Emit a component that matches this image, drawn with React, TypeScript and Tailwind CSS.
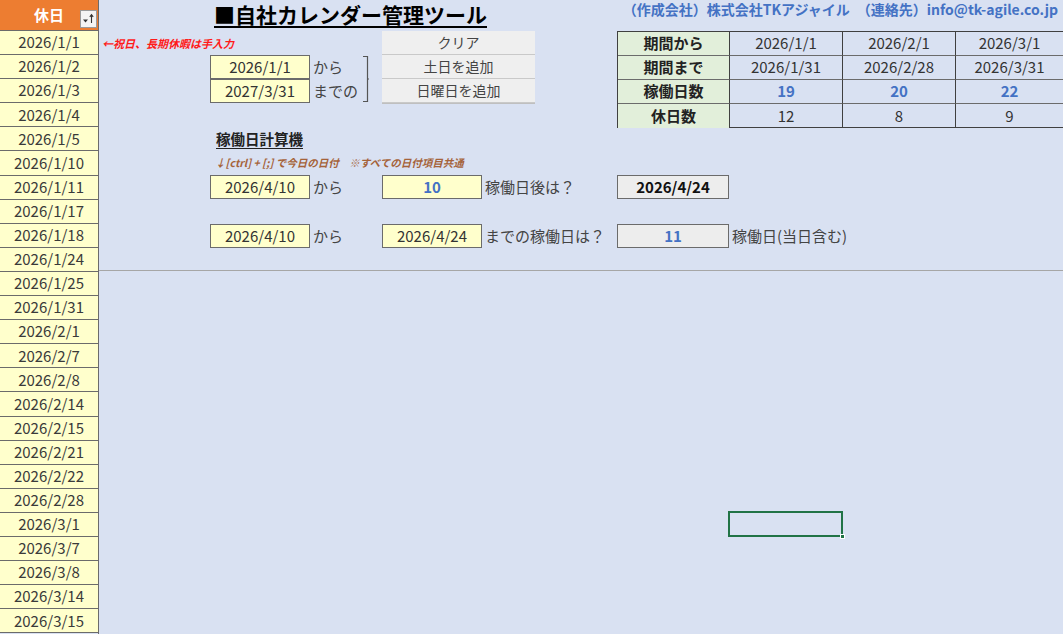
import React from "react";

const holidays = [
  "2026/1/1", "2026/1/2", "2026/1/3", "2026/1/4", "2026/1/5", "2026/1/10", "2026/1/11",
  "2026/1/17", "2026/1/18", "2026/1/24", "2026/1/25", "2026/1/31", "2026/2/1", "2026/2/7",
  "2026/2/8", "2026/2/14", "2026/2/15", "2026/2/21", "2026/2/22", "2026/2/28", "2026/3/1",
  "2026/3/7", "2026/3/8", "2026/3/14", "2026/3/15",
];

const periods = [
  { from: "2026/1/1", to: "2026/1/31", work: 19, off: 12 },
  { from: "2026/2/1", to: "2026/2/28", work: 20, off: 8 },
  { from: "2026/3/1", to: "2026/3/31", work: 22, off: 9 },
];

const font = { fontFamily: '"Noto Sans CJK JP", "Noto Sans", sans-serif' };

function InputCell({ children, blue }: { children: React.ReactNode; blue?: boolean }) {
  return (
    <div
      className={`w-[100px] h-[24px] flex items-center justify-center bg-[#ffffcc] border border-[#6b6b6b] text-[15px] ${
        blue ? "text-[#4472c4] font-bold" : "text-[#333]"
      }`}
    >
      {children}
    </div>
  );
}

function SheetButton({ label }: { label: string }) {
  return (
    <div className="h-[24px] flex items-center justify-center bg-[#efefef] border-b border-[#c9c9c9] text-[14px] text-[#444] shadow-[0_1px_0_#bfbfbf]">
      {label}
    </div>
  );
}

function FilterButton() {
  return (
    <div className="absolute right-[1px] bottom-[2px] w-[17px] h-[18px] bg-[#f4f4f4] border border-[#9a9a9a] flex items-center justify-center">
      <svg width="13" height="12" viewBox="0 0 13 12">
        <path d="M1 6.5h5l-2.5 3z" fill="#333" />
        <path d="M9.5 10V2M7.8 3.8L9.5 1.6l1.7 2.2" stroke="#333" strokeWidth="1.1" fill="none" />
      </svg>
    </div>
  );
}

export default function App() {
  return (
    <div className="w-[1063px] h-[634px] overflow-hidden flex bg-[#d9e1f2]" style={font}>
      {/* Column A: holidays */}
      <div className="w-[99px] shrink-0 flex flex-col border-r border-[#6b6b6b]">
        <div className="relative h-[31px] bg-[#ed7d31] flex items-center justify-center text-white font-bold text-[15px] border-b border-[#6b6b6b]">
          休日
          <FilterButton />
        </div>
        {holidays.map((d) => (
          <div
            key={d}
            className="h-[24.1px] shrink-0 flex items-center justify-center bg-[#ffffcc] border-b border-[#6b6b6b] text-[15px] text-[#3a3a3a]"
          >
            {d}
          </div>
        ))}
      </div>

      {/* Sheet body */}
      <div className="relative flex-1 flex flex-col">
        {/* Title row */}
        <div className="h-[31px] flex items-start">
          <div className="ml-[115px] text-[21px] leading-[28px] font-bold text-black underline underline-offset-[3px] decoration-[2px]">
            ■自社カレンダー管理ツール
          </div>
          <div className="ml-auto mr-[5px] mt-[1px] text-[14px] leading-[16px] font-semibold text-[#4472c4] whitespace-nowrap">
            （作成会社）株式会社TKアジャイル　（連絡先）info@tk-agile.co.jp
          </div>
        </div>

        {/* Period / buttons / table */}
        <div className="h-[96px] flex">
          <div className="w-[283px] flex flex-col">
            <div className="h-[24px] flex items-center pl-[3px] text-[11px] font-bold italic text-[#ff1a1a]">
              ←祝日、長期休暇は手入力
            </div>
            <div className="flex ml-[111px]">
              <div className="flex flex-col">
                <InputCell>2026/1/1</InputCell>
                <InputCell>2027/3/31</InputCell>
              </div>
              <div className="flex flex-col pl-[3px] text-[15px] text-[#444]">
                <div className="h-[24px] flex items-center">から</div>
                <div className="h-[24px] flex items-center">までの</div>
              </div>
              <svg width="10" height="48" viewBox="0 0 10 48" className="ml-[4px]">
                <path d="M1 1.5h4.5v45H1M5.5 24h1.5" stroke="#555" strokeWidth="1.2" fill="none" />
              </svg>
            </div>
          </div>
          <div className="w-[153px] flex flex-col">
            <SheetButton label="クリア" />
            <SheetButton label="土日を追加" />
            <SheetButton label="日曜日を追加" />
          </div>
          <div className="w-[82px]" />
          <div className="flex-1 h-[97px] grid grid-cols-[112px_113px_113px_1fr] grid-rows-[repeat(4,24px)] border-t border-l border-b border-[#404040] text-[15px]">
            {[
              { label: "期間から", cells: periods.map((p) => p.from), blue: false },
              { label: "期間まで", cells: periods.map((p) => p.to), blue: false },
              { label: "稼働日数", cells: periods.map((p) => String(p.work)), blue: true },
              { label: "休日数", cells: periods.map((p) => String(p.off)), blue: false },
            ].map((row, ri) => (
              <React.Fragment key={row.label}>
                <div
                  className={`flex items-center justify-center bg-[#e2efda] font-bold text-[#222] border-r border-[#404040] ${
                    ri < 3 ? "border-b border-b-[#6b6b6b]" : ""
                  }`}
                >
                  {row.label}
                </div>
                {row.cells.map((c, ci) => (
                  <div
                    key={ci}
                    className={`flex items-center justify-center ${ci < 2 ? "border-r border-[#404040]" : ""} ${
                      ri < 3 ? "border-b border-b-[#6b6b6b]" : ""
                    } ${row.blue ? "text-[#4472c4] font-bold" : "text-[#333]"}`}
                  >
                    {c}
                  </div>
                ))}
              </React.Fragment>
            ))}
          </div>
        </div>

        {/* Calculator heading */}
        <div className="h-[24px] flex items-center pl-[117px] text-[14.5px] font-bold text-[#222] underline underline-offset-[3px]">
          稼働日計算機
        </div>
        <div className="h-[24px] flex items-center pl-[116px] text-[10.5px] font-bold italic text-[#a5633a] whitespace-pre">
          {"↓[ctrl] + [;] で今日の日付　※すべての日付項目共通"}
        </div>

        {/* Calc row 1 */}
        <div className="h-[24px] flex items-center pl-[111px] text-[15px] text-[#444]">
          <InputCell>2026/4/10</InputCell>
          <div className="w-[72px] pl-[3px]">から</div>
          <InputCell blue>10</InputCell>
          <div className="w-[135px] pl-[3px]">稼働日後は？</div>
          <div className="w-[112px] h-[24px] flex items-center justify-center bg-[#ededed] border border-[#6b6b6b] font-bold text-[#111]">
            2026/4/24
          </div>
        </div>
        <div className="h-[25px]" />

        {/* Calc row 2 */}
        <div className="h-[24px] flex items-center pl-[111px] text-[15px] text-[#444]">
          <InputCell>2026/4/10</InputCell>
          <div className="w-[72px] pl-[3px]">から</div>
          <InputCell>2026/4/24</InputCell>
          <div className="w-[135px] pl-[3px]">までの稼働日は？</div>
          <div className="w-[112px] h-[24px] flex items-center justify-center bg-[#ededed] border border-[#6b6b6b] font-bold text-[#4472c4]">
            11
          </div>
          <div className="pl-[3px]">稼働日(当日含む)</div>
        </div>
        <div className="h-[23px] border-b border-[#a6a6a6]" />

        {/* Active cell selection */}
        <div className="absolute left-[629px] top-[511px] w-[115px] h-[26px] border-2 border-[#217346]">
          <div className="absolute right-[-4px] bottom-[-4px] w-[5px] h-[5px] bg-[#217346] border border-white" />
        </div>
      </div>
    </div>
  );
}
